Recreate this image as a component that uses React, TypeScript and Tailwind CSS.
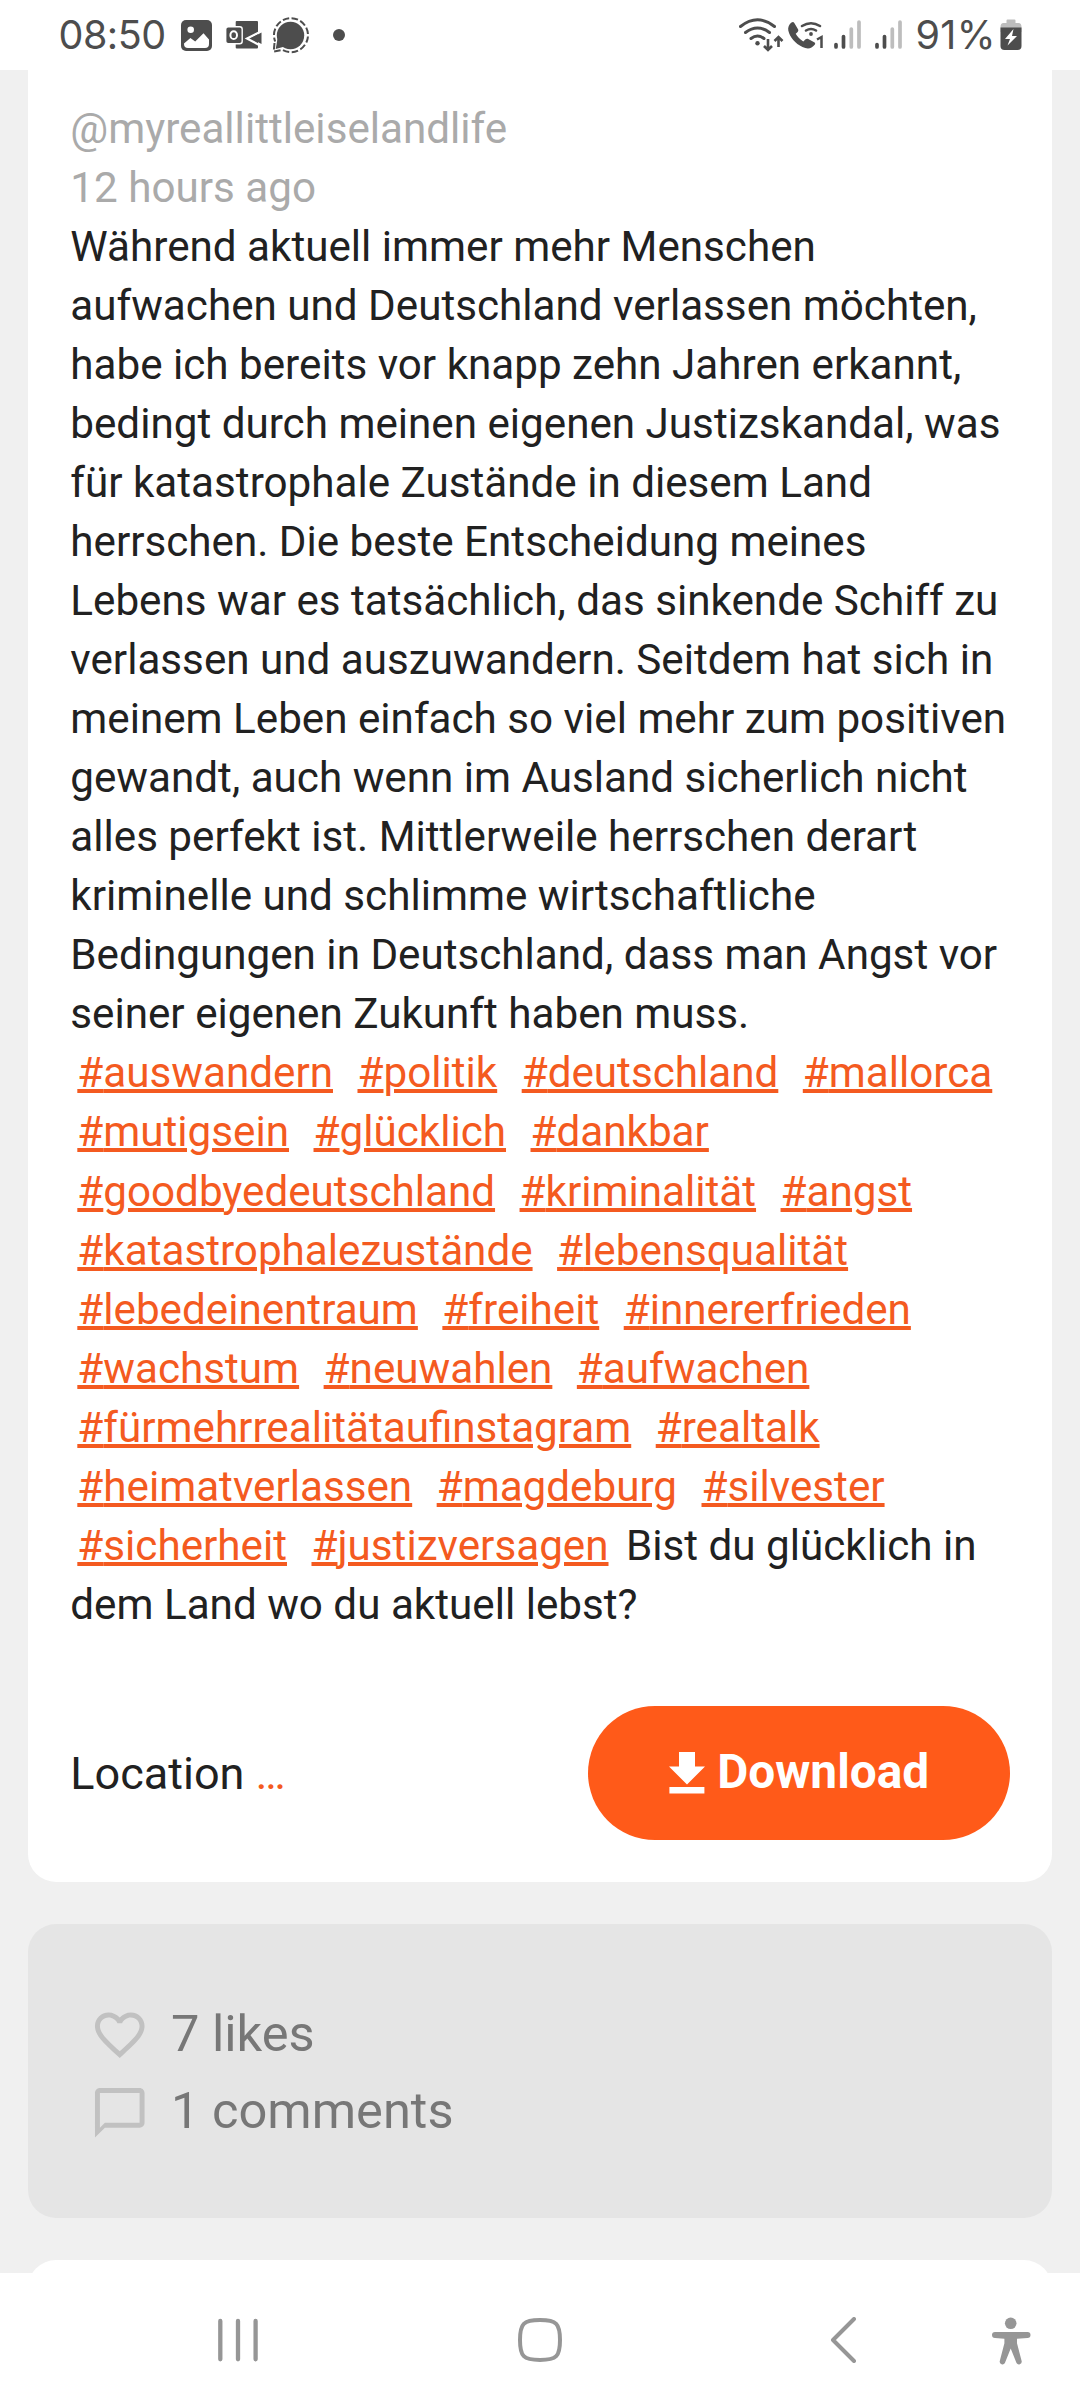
import { Fragment } from "react";

const hashtags = [
  "auswandern", "politik", "deutschland", "mallorca", "mutigsein", "glücklich", "dankbar",
  "goodbyedeutschland", "kriminalität", "angst", "katastrophalezustände", "lebensqualität",
  "lebedeinentraum", "freiheit", "innererfrieden", "wachstum", "neuwahlen", "aufwachen",
  "fürmehrrealitätaufinstagram", "realtalk", "heimatverlassen", "magdeburg", "silvester",
  "sicherheit", "justizversagen",
];

function NotificationIcons() {
  return (
    <svg width="170" height="40" viewBox="178 15 170 40" fill="#4d4d4d" className="ml-[17px]">
      {/* gallery */}
      <rect x="181" y="20" width="31" height="31" rx="5" />
      <circle cx="190.7" cy="29.8" r="3.3" fill="#fff" />
      <path d="M184 43.5l6.4-5.6 4.8 3.6 8.3-8.3 5.5 6.3v4.5q0 4-4 4h-17q-4 0-4-4z" fill="#fff" />
      {/* outlook */}
      <rect x="235.700" y="21" width="22.300" height="27.500" rx="1" />
      <path d="M263 30.500l-16 8 16 8.500" fill="none" stroke="#fff" strokeWidth="2.200" />
      <path d="M261.500 32.500v11.500l-11-5.700z" />
      <rect x="225.700" y="26.700" width="16.500" height="17" rx="2.500" stroke="#fff" strokeWidth="1.400" />
      <ellipse cx="233.700" cy="35.200" rx="3.300" ry="3.900" fill="none" stroke="#fff" strokeWidth="2" />
      {/* signal */}
      <circle cx="290.500" cy="35.500" r="13.700" />
      <path d="M277.500 39l-1.800 10 9-2.500z" />
      <path
        d="M274.500 43l-.8 8.500 9-1.500a17 17 0 1 0-7.500-8.500"
        fill="none" stroke="#4d4d4d" strokeWidth="2" strokeDasharray="6.500 2.500"
      />
      <circle cx="339" cy="35" r="6" />
    </svg>
  );
}

function ConnectionIcons() {
  return (
    <svg width="166" height="40" viewBox="738 15 166 40" fill="#4d4d4d">
      {/* wifi */}
      <g fill="none" stroke="#4d4d4d" strokeWidth="3" strokeLinecap="round">
        <path d="M740.500 26.500q17-13.500 34 0" />
        <path d="M745.500 32.500q12-9 24 0" />
        <path d="M751 38.500q6.500-5 13 0" />
      </g>
      <circle cx="757.500" cy="43.300" r="2.200" />
      <path d="M768 39v10.500m-4-3.500l4 4 4-4M778.500 47V37.500m-4 3.500l4-4 4 4" fill="none" stroke="#4d4d4d" strokeWidth="2.600" />
      {/* wifi calling */}
      <path d="M791.500 22.500c1.200-.9 2.200-.6 2.800.6l3.700 6.200c.6 1.200.3 2-.6 2.900l-1.700 1.600c1.900 3.300 4.200 5.700 7.600 7.700l2.300-2.200c.8-.7 1.600-.8 2.600-.3l6 3.300c1.200.7 1.300 1.500.5 2.500-3.200 4-7 4.600-12.200 2.300-7.200-3.500-12.700-9.500-14.200-16.500-.6-3.400.8-6.400 3.200-8.100z" />
      <g fill="none" stroke="#4d4d4d" strokeWidth="2.600" strokeLinecap="round">
        <path d="M802 26q9-5.500 18 0" />
        <path d="M806 30.500q5-3 10 0" />
      </g>
      <circle cx="811" cy="34" r="1.900" />
      <path d="M817 39.500l4.500-2.500V48" fill="none" stroke="#4d4d4d" strokeWidth="2.500" />
      {/* both sim signals */}
      {[0, 41].map((dx) => (
        <g key={dx} strokeWidth="3.700" strokeLinecap="round">
          <path d={`M${836 + dx} 44.500v2.500M${843.500 + dx} 36.500v10.500`} stroke="#4d4d4d" />
          <path d={`M${851.300 + dx} 29v18M${859 + dx} 22v25`} stroke="#bdbdbd" />
        </g>
      ))}
    </svg>
  );
}

function StatusBar() {
  return (
    <header className="flex h-[70px] shrink-0 items-center bg-white font-['Inter',sans-serif] text-[39.5px] leading-none text-[#4d4d4d]">
      <span className="ml-[58.5px] w-[102.5px] pt-[2px] whitespace-nowrap font-[375] tracking-[-0.5px]">08:50</span>
      <NotificationIcons />
      <div className="ml-auto flex items-center pr-[58px]">
        <ConnectionIcons />
        <span className="ml-[12px] w-[84.5px] pt-[2px] whitespace-nowrap font-[375] tracking-[0.3px]">91%</span>
        <svg width="22" height="32" viewBox="0 0 22 32">
          <path d="M6.500 4V1.500q0-1 1-1h7q1 0 1 1V4h3q3 0 3 4v5h-21V8q0-4 3-4z" fill="#bdbdbd" />
          <path d="M.5 8.500h21V27q0 4-4 4h-13q-4 0-4-4z" fill="#4d4d4d" />
          <path d="M13.500 10L5 20h5l-2.500 6.500L17 17h-5z" fill="#fff" />
        </svg>
      </div>
    </header>
  );
}

function Post() {
  return (
    <article className="rounded-b-[28px] bg-white px-[42.3px] pt-[28.7px] pb-[42px]">
      <div className="text-[42.19px] leading-[59.04px] text-[#212121]">
        <p className="text-[#aaaaaa]">@myreallittleiselandlife</p>
        <p className="text-[#aaaaaa]">12 hours ago</p>
        <p>
          Während aktuell immer mehr Menschen aufwachen und Deutschland verlassen möchten, habe ich
          bereits vor knapp zehn Jahren erkannt, bedingt durch meinen eigenen Justizskandal, was für
          katastrophale Zustände in diesem Land herrschen. Die beste Entscheidung meines Lebens war es
          tatsächlich, das sinkende Schiff zu verlassen und auszuwandern. Seitdem hat sich in meinem
          Leben einfach so viel mehr zum positiven gewandt, auch wenn im Ausland sicherlich nicht
          alles perfekt ist. Mittlerweile herrschen derart kriminelle und schlimme wirtschaftliche
          Bedingungen in Deutschland, dass man Angst vor seiner eigenen Zukunft haben muss.{" "}
          {hashtags.map((tag) => (
            <Fragment key={tag}>
              <a href="#" className="mx-[7.03px] text-[#f45a20] underline decoration-[4px]">#{tag}</a>{" "}
            </Fragment>
          ))}
          Bist du glücklich in dem Land wo du aktuell lebst?
        </p>
      </div>

      <div className="mt-[72.25px] flex items-center justify-between">
        <p className="text-[45px] leading-[63px] text-[#212121]">
          Location <a href="#" className="text-[#f45a20]">…</a>
        </p>
        <button className="flex h-[134px] w-[422px] items-center rounded-full bg-[#ff5a19] pl-[81.5px] text-[47.8px] leading-none font-bold text-white">
          <svg width="36" height="42" viewBox="0 0 36 42" fill="currentColor" className="mt-[-1px] mr-[12px]">
            <path d="M10 0h16v14.500h10L18 32.500 0 14.500h10z" />
            <path d="M.4 35h35v6.500H.4z" />
          </svg>
          Download
        </button>
      </div>
    </article>
  );
}

function Stats() {
  return (
    <section className="mt-[42px] flex h-[294px] flex-col rounded-[28px] bg-[#e5e5e5] pt-[71px] pl-[62px] text-[50.6px] leading-[77px] text-[#777777]">
      <div className="flex items-center">
        <svg width="59.5" height="59.5" viewBox="0 0 24 24" fill="#c1c1c1" className="mt-[2px] mr-[21.5px]">
          <path d="M16.5 3c-1.740 0-3.410.81-4.500 2.090C10.910 3.810 9.240 3 7.500 3 4.420 3 2 5.420 2 8.500c0 3.780 3.400 6.860 8.550 11.540L12 21.350l1.450-1.320C18.600 15.360 22 12.280 22 8.500 22 5.420 19.580 3 16.500 3zm-4.400 15.550l-.1.100-.1-.100C7.140 14.240 4 11.390 4 8.500 4 6.500 5.500 5 7.500 5c1.540 0 3.040.99 3.570 2.360h1.870C13.460 5.990 14.960 5 16.500 5c2 0 3.500 1.500 3.500 3.500 0 2.890-3.140 5.740-7.900 10.050z" />
        </svg>
        <span>7 likes</span>
      </div>
      <div className="flex items-center">
        <svg width="59.5" height="59.5" viewBox="0 0 24 24" fill="#c1c1c1" className="mt-[4px] mr-[21.5px]">
          <path d="M20 2H4c-1.100 0-2 .9-2 2v18l4-4h14c1.100 0 2-.9 2-2V4c0-1.100-.9-2-2-2zm0 14H6l-2 2V4h16v12z" />
        </svg>
        <span>1 comments</span>
      </div>
    </section>
  );
}

function NavigationBar() {
  return (
    <nav className="flex h-[135px] shrink-0 items-start bg-white pt-[44px] pl-[216px]">
      <svg width="44" height="46" viewBox="216 2317 44 46" stroke="#969696" strokeWidth="4.300" strokeLinecap="round">
        <path d="M220.300 2321v38.300M238 2321v38.300M255.600 2321v38.300" />
      </svg>
      <svg width="46" height="46" viewBox="517 2317 46 46" className="ml-[257px]">
        <path
          d="M540 2320c16.500 0 20 3.500 20 20s-3.500 20-20 20-20-3.500-20-20 3.500-20 20-20z"
          fill="none" stroke="#969696" strokeWidth="4"
        />
      </svg>
      <svg width="28" height="46" viewBox="830 2317 28 46" className="ml-[267px]">
        <path d="M854 2319l-21 21 21 21" fill="none" stroke="#969696" strokeWidth="4" strokeLinecap="round" strokeLinejoin="round" />
      </svg>
      <svg width="40" height="50" viewBox="991 2316 40 50" fill="#969696" className="ml-[133px] -mt-px">
        <circle cx="1010.700" cy="2323.300" r="5.800" />
        <path d="M995 2332h32.500a3 3 0 0 1 0 6l-10.500.7v4.500l4.700 18a2.800 2.800 0 0 1-5.200 1.800l-5.800-14.500-5.800 14.500a2.800 2.800 0 0 1-5.200-1.800l4.700-18v-4.500l-9.400-.7a3 3 0 0 1 0-6z" />
      </svg>
    </nav>
  );
}

export default function App() {
  return (
    <div className="flex h-[2408px] w-[1080px] flex-col overflow-hidden bg-white font-['Roboto',sans-serif]">
      <StatusBar />
      <main className="h-[2203px] shrink-0 overflow-hidden bg-[#f0f0f0] px-[28px]">
        <Post />
        <Stats />
        <section className="mt-[42px] h-20 rounded-t-[28px] bg-white" />
      </main>
      <NavigationBar />
    </div>
  );
}
